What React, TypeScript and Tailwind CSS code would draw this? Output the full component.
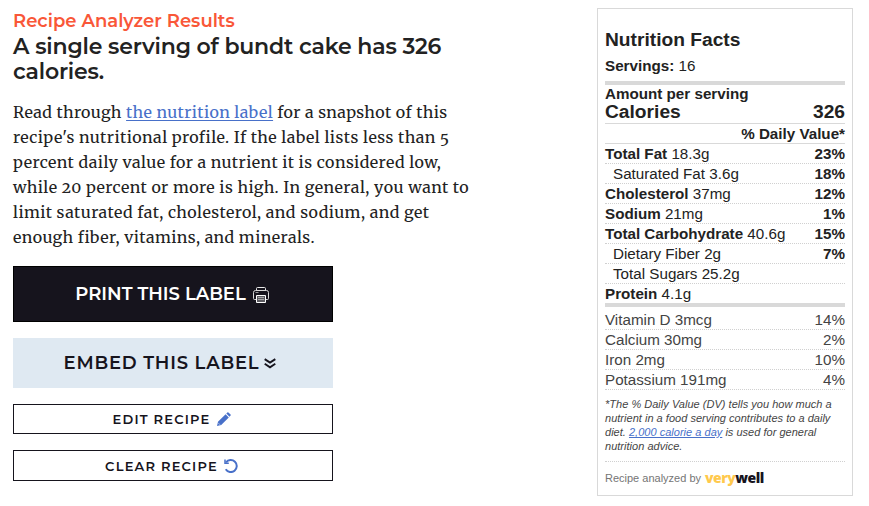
import type { ReactNode } from "react";

type Nutrient = { name: string; amount: string; value?: string; kind: "main" | "sub" };

const nutrients: Nutrient[] = [
  { name: "Total Fat", amount: "18.3g", value: "23%", kind: "main" },
  { name: "Saturated Fat", amount: "3.6g", value: "18%", kind: "sub" },
  { name: "Cholesterol", amount: "37mg", value: "12%", kind: "main" },
  { name: "Sodium", amount: "21mg", value: "1%", kind: "main" },
  { name: "Total Carbohydrate", amount: "40.6g", value: "15%", kind: "main" },
  { name: "Dietary Fiber", amount: "2g", value: "7%", kind: "sub" },
  { name: "Total Sugars", amount: "25.2g", kind: "sub" },
  { name: "Protein", amount: "4.1g", kind: "main" },
];

const vitamins = [
  ["Vitamin D 3mcg", "14%"],
  ["Calcium 30mg", "2%"],
  ["Iron 2mg", "10%"],
  ["Potassium 191mg", "4%"],
];

function PrinterIcon() {
  return (
    <svg width="16" height="16" viewBox="0 0 16 16" fill="none" stroke="#fff" strokeWidth="1" className="mt-[2px]">
      <path d="M3.5 3.5V1.5Q3.5.5 4.5.5h7q1 0 1 1v2" stroke="#e8e8e8" />
      <path d="M3 12.5H1.5q-1 0-1-1v-6q0-2 2-2h11q2 0 2 2v6q0 1-1 1H13" stroke="#d8d8d8" />
      <path d="M3.5 8.5h9v7h-9z" fill="#5b5a60" />
      <path d="M5 10.5h6M5 12.5h6M2.5 5.5h3" strokeWidth=".8" stroke="#bbb" />
    </svg>
  );
}

function ChevronsIcon() {
  return (
    <svg width="12" height="11" viewBox="0 0 12 11" fill="none" stroke="#16141d" strokeWidth="1.9">
      <path d="M.7 1.1 6 4.6 11.3 1.1M.7 5.8 6 9.3l5.3-3.5" />
    </svg>
  );
}

function PencilIcon() {
  return (
    <svg width="14" height="14" viewBox="0 0 14 14" fill="#4870c9">
      <path d="M0 14 1 9.8 8.6 2.2 11.8 5.4 4.2 13zM9.3 1.5 10.4.4Q10.9 0 11.4.4L13.6 2.6Q14 3.1 13.6 3.6L12.5 4.7z" />
      <path d="M1.1 10.8 3.2 12.9" stroke="#fff" strokeWidth=".5" />
    </svg>
  );
}

function ResetIcon() {
  return (
    <svg width="14" height="14" viewBox="0 0 14 14" fill="none" stroke="#4870c9" strokeWidth="2">
      <path d="M2 3.4A6 6 0 1 1 1.7 10.3" />
      <path d="M1 .6V4.3H4.8" strokeWidth="1.5" />
    </svg>
  );
}

function Line({ children }: { children: ReactNode }) {
  return <span className="block whitespace-nowrap">{children}</span>;
}

export default function App() {
  return (
    <main className="flex h-[506px] w-[869px] items-start justify-between overflow-hidden bg-white pl-[13px] pr-4 pt-2 text-[#222]">
      <section className="w-[470px] font-['Montserrat','Inter',sans-serif]">
        <p className="mt-px whitespace-nowrap text-[18px] font-semibold leading-6 text-[#f95738]">
          Recipe Analyzer Results
        </p>
        <h1 className="mt-px text-[22px] font-semibold leading-[25px] tracking-[-0.19px]">
          <Line>A single serving of bundt cake has 326</Line>
          <Line>calories.</Line>
        </h1>
        <div className="mt-4 font-['Merriweather','DejaVu_Serif_Condensed','DejaVu_Serif',serif] text-[16px] leading-[25px] tracking-[0.44px] oldstyle-nums">
          <span className="block whitespace-nowrap tracking-[0.4px]">
            Read through <a className="text-[#4870c9] underline decoration-1 underline-offset-2">the nutrition label</a> for a snapshot of this
          </span>
          <Line>recipe's nutritional profile. If the label lists less than 5</Line>
          <Line>percent daily value for a nutrient it is considered low,</Line>
          <Line>while 20 percent or more is high. In general, you want to</Line>
          <Line>limit saturated fat, cholesterol, and sodium, and get</Line>
          <span className="block whitespace-nowrap tracking-[0.4px]">enough fiber, vitamins, and minerals.</span>
        </div>
        <div className="mt-4 flex w-80 flex-col gap-4 whitespace-nowrap text-[#16141d]">
          <button className="flex h-14 items-center justify-center gap-[7px] border border-black bg-[#16141d] pr-[2px] text-[18px] font-semibold text-white">
            <span>PRINT THIS LABEL</span>
            <PrinterIcon />
          </button>
          <button className="flex h-[50px] items-center justify-center gap-[5px] bg-[#dfe9f2] pr-[6px] text-[18px] font-semibold tracking-[0.8px]">
            <span>EMBED THIS LABEL</span>
            <ChevronsIcon />
          </button>
          <button className="flex h-[30px] items-center justify-center gap-[7px] border border-[#16141d] pr-[2px] text-[13px] font-semibold tracking-[1.2px]">
            <span className="pt-[2px]">EDIT RECIPE</span>
            <PencilIcon />
          </button>
          <button className="flex h-[31px] items-center justify-center gap-[6px] border border-[#16141d] pr-[3px] text-[13px] font-semibold tracking-[1.2px]">
            <span className="pt-[2px]">CLEAR RECIPE</span>
            <ResetIcon />
          </button>
        </div>
      </section>

      <aside className="h-[488px] w-64 whitespace-nowrap border border-[#d9d9d9] px-[7px] font-['Liberation_Sans',sans-serif] text-[15.2px] leading-[19px]">
        <h2 className="mt-[19px] text-[19.2px] font-bold leading-6">Nutrition Facts</h2>
        <p className="mt-1"><b>Servings:</b> 16</p>
        <div className="mt-[6px] h-1 bg-[#d9d9d9]" />
        <p className="h-[17px] font-bold leading-[17px]">Amount per serving</p>
        <div className="flex h-[22px] justify-between border-b border-[#d9d9d9] text-[19.2px] font-bold leading-[20px]">
          <span>Calories</span>
          <span>326</span>
        </div>
        <p className="h-5 border-b border-[#d9d9d9] text-right font-bold">% Daily Value*</p>
        {nutrients.map((n, i) => (
          <div
            key={n.name}
            className={`flex justify-between ${n.kind === "sub" ? "pl-2" : ""} ${
              i < nutrients.length - 1 ? "h-5 border-b border-dotted border-[#d0d0d0]" : "h-[19px]"
            }`}
          >
            <span>
              <span className={n.kind === "main" ? "font-bold" : ""}>{n.name}</span> {n.amount}
            </span>
            <b>{n.value}</b>
          </div>
        ))}
        <div className="mb-[3px] h-1 bg-[#d9d9d9]" />
        {vitamins.map(([name, value]) => (
          <div key={name} className="flex h-5 justify-between border-b border-dotted border-[#d0d0d0] text-[#444]">
            <span>{name}</span>
            <span>{value}</span>
          </div>
        ))}
        <div className="mt-[7px] border-b border-dotted border-[#d0d0d0] pb-2 text-[11px] italic leading-[14px] tracking-[0.02px] text-[#444]">
          <Line>*The % Daily Value (DV) tells you how much a</Line>
          <Line>nutrient in a food serving contributes to a daily</Line>
          <Line>
            diet. <a className="text-[#4870c9] underline">2,000 calorie a day</a> is used for general
          </Line>
          <Line>nutrition advice.</Line>
        </div>
        <div className="mt-[7px] flex h-[19px] items-center gap-1 text-[11px] text-[#757575]">
          <span>Recipe analyzed by</span>
          <span className="pb-[2px] font-['Open_Sans',sans-serif] text-[14px] font-extrabold tracking-[-0.5px] text-[#ffc94d]">
            very<span className="text-[#16141d]">well</span>
          </span>
        </div>
      </aside>
    </main>
  );
}
